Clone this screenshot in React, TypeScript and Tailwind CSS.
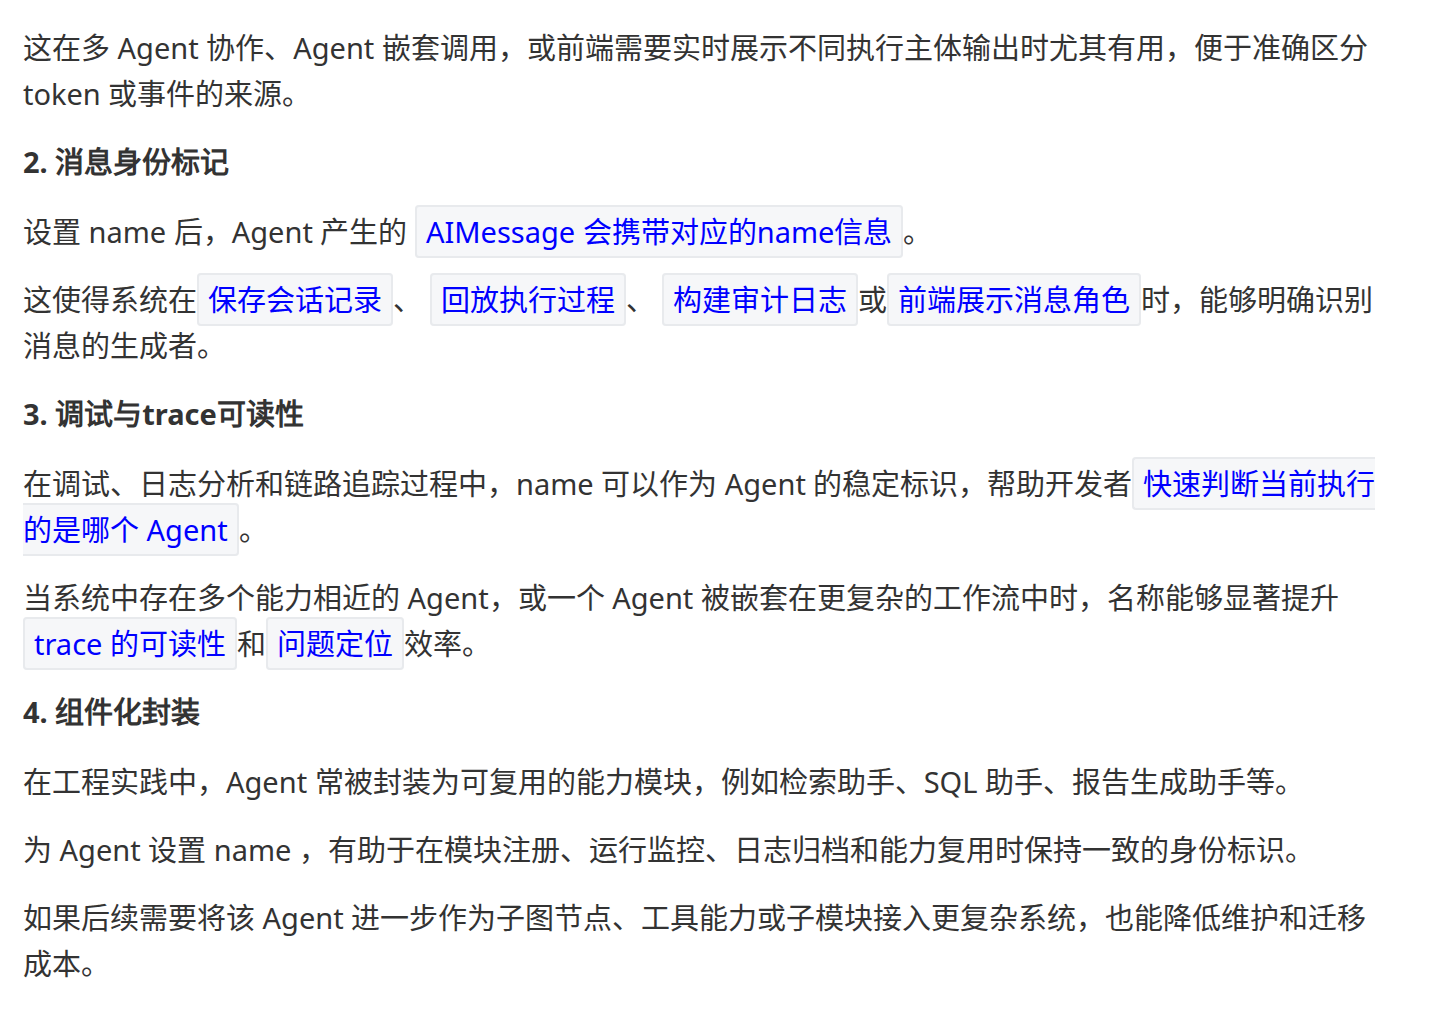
const C = ({ children }: { children: React.ReactNode }) => (
  <code className="rounded-[4px] border-2 border-[#e8eaed] bg-[#f6f7f9] px-[9px] py-[5px] text-[#0000ff] [font-family:inherit]">
    {children}
  </code>
);

const P = ({ children }: { children: React.ReactNode }) => (
  <p className="mb-[22px]">{children}</p>
);

const H = ({ children }: { children: React.ReactNode }) => (
  <h4 className="mb-[24px] font-bold text-[#333]">{children}</h4>
);

export default function App() {
  return (
    <div
      lang="zh-CN"
      className="min-h-screen bg-white pl-[23px] pr-[40px] pt-[25px] text-[29px] leading-[46px] text-[#333] [font-family:'Open_Sans','Noto_Sans_CJK_SC',sans-serif]"
    >
      <div className="w-[1362px]">
        <P>这在多 Agent 协作、Agent 嵌套调用，或前端需要实时展示不同执行主体输出时尤其有用，便于准确区分 token 或事件的来源。</P>
        <H>2. 消息身份标记</H>
        <P>设置 name 后，Agent 产生的 <C>AIMessage 会携带对应的name信息</C>。</P>
        <P>
          这使得系统在<C>保存会话记录</C>、 <C>回放执行过程</C>、 <C>构建审计日志</C>或<C>前端展示消息角色</C>时，能够明确识别消息的生成者。
        </P>
        <H>3. 调试与trace可读性</H>
        <P>
          在调试、日志分析和链路追踪过程中，name 可以作为 Agent 的稳定标识，帮助开发者<C>快速判断当前执行的是哪个 Agent</C>。
        </P>
        <P>
          当系统中存在多个能力相近的 Agent，或一个 Agent 被嵌套在更复杂的工作流中时，名称能够显著提升<C>trace 的可读性</C>和<C>问题定位</C>效率。
        </P>
        <H>4. 组件化封装</H>
        <P>在工程实践中，Agent 常被封装为可复用的能力模块，例如检索助手、SQL 助手、报告生成助手等。</P>
        <P>为 Agent 设置 name ，有助于在模块注册、运行监控、日志归档和能力复用时保持一致的身份标识。</P>
        <P>如果后续需要将该 Agent 进一步作为子图节点、工具能力或子模块接入更复杂系统，也能降低维护和迁移成本。</P>
      </div>
    </div>
  );
}
